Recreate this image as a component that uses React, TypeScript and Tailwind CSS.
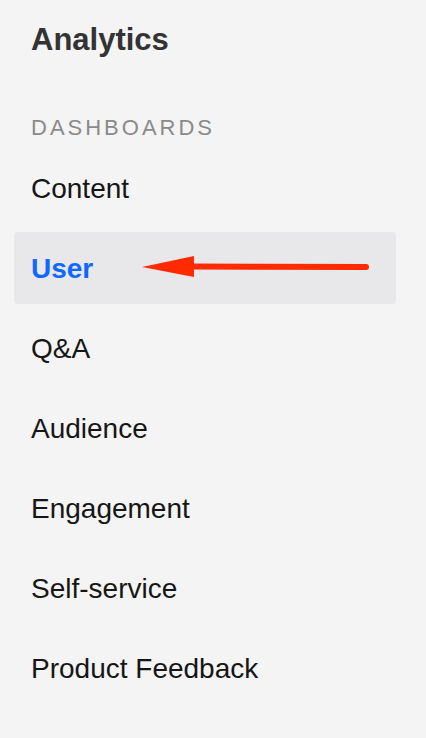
import React from "react";

const items = ["Content", "User", "Q&A", "Audience", "Engagement", "Self-service", "Product Feedback"];

export default function App() {
  return (
    <div
      className="min-h-[738px] w-full bg-[#f4f4f4] pt-[22px]"
      style={{ fontFamily: '"Liberation Sans", Arial, Helvetica, sans-serif' }}
    >
      <h1 className="pl-[31px] text-[31px] font-bold leading-[36px] text-[#333333]">Analytics</h1>
      <div className="mt-[56px] pl-[31px] text-[22px] leading-[28px] tracking-[3px] text-[#8a8a8a]">DASHBOARDS</div>
      <nav className="mt-[10px] ml-[14px] flex w-[382px] flex-col gap-2">
        {items.map((label) => {
          const active = label === "User";
          return (
            <div
              key={label}
              className={
                active
                  ? "relative flex h-[72px] items-center rounded-[4px] bg-[#e8e8ea] pl-[17px] pt-[2px] text-[28px] font-bold text-[#0f68ff]"
                  : "relative flex h-[72px] items-center pl-[17px] pt-[2px] text-[28px] text-[#161616]"
              }
            >
              <span className="leading-[32px]">{label}</span>
              {active && (
                <svg className="absolute left-0 top-0" width="382" height="72" viewBox="0 0 382 72">
                  <polygon points="128,35 180,24 180,45" fill="#ff2a00" />
                  <line x1="176" y1="34.5" x2="352" y2="35" stroke="#ff2a00" strokeWidth="6" strokeLinecap="round" />
                </svg>
              )}
            </div>
          );
        })}
      </nav>
    </div>
  );
}
